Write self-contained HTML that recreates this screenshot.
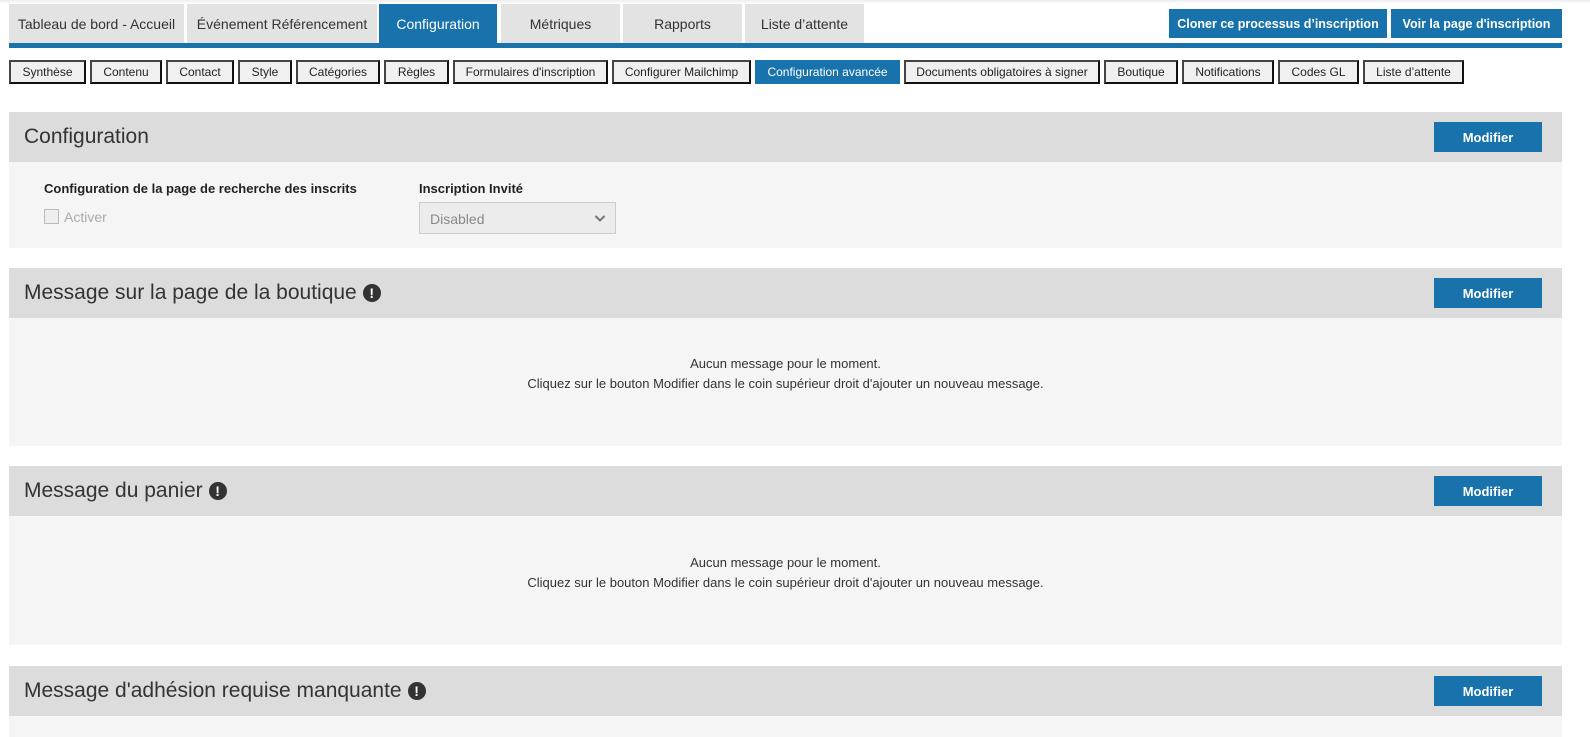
<!DOCTYPE html>
<html><head><meta charset="utf-8"><style>
*{box-sizing:border-box;margin:0;padding:0}
body{width:1590px;height:737px;overflow:hidden;background:#fff;font-family:"Liberation Sans",Arial,sans-serif;color:#333;position:relative}
.a{position:absolute}
.tab{position:absolute;top:4px;height:39px;background:#e3e3e3;font-size:14px;color:#333;display:flex;align-items:center;justify-content:center}
.tab.on{background:#1872ab;color:#fff}
.btn{position:absolute;background:#1872ab;color:#fff;font-size:12.5px;font-weight:bold;display:flex;align-items:center;justify-content:center}
.st{position:absolute;top:60px;height:24px;background:#f0f0f0;border:2px solid #555;border-top-color:#444;border-left-color:#444;border-right-color:#111;border-bottom-color:#111;font-size:12px;color:#222;display:flex;align-items:center;justify-content:center}
.st.on{background:#1872ab;color:#fff;border-color:#1872ab}
.hd{position:absolute;left:9px;width:1553px;height:50px;background:#dcdcdc;font-size:21px;color:#333;display:flex;align-items:center;padding-left:15px}
.bd{position:absolute;left:9px;width:1553px;background:#f5f5f5}
.mod{position:absolute;left:1434px;width:108px;height:30px;background:#1872ab;color:#fff;font-size:13px;font-weight:bold;display:flex;align-items:center;justify-content:center}
.ex{display:inline-block;width:18px;height:18px;border-radius:50%;background:#333;color:#fff;font-size:14px;font-weight:bold;text-align:center;line-height:18px;margin-left:6px}
.msg{position:absolute;left:9px;width:1553px;text-align:center;font-size:13px;line-height:20px;color:#333}
</style></head><body>
<div class="a" style="left:0;top:0;width:1590px;height:4px;background:linear-gradient(#eee,#fff)"></div>
<div class="tab" style="left:9px;width:175px">Tableau de bord - Accueil</div>
<div class="tab" style="left:187px;width:190px">Événement Référencement</div>
<div class="tab on" style="left:379px;width:118px">Configuration</div>
<div class="tab" style="left:501px;width:119px">Métriques</div>
<div class="tab" style="left:623px;width:119px">Rapports</div>
<div class="tab" style="left:745px;width:119px">Liste d’attente</div>
<div class="btn" style="left:1169px;top:9px;width:218px;height:29px">Cloner ce processus d’inscription</div>
<div class="btn" style="left:1391px;top:9px;width:171px;height:29px">Voir la page d'inscription</div>
<div class="a" style="left:9px;top:43px;width:1553px;height:5px;background:#1872ab"></div>

<div class="st" style="left:9px;width:77px">Synthèse</div>
<div class="st" style="left:90px;width:72px">Contenu</div>
<div class="st" style="left:166px;width:68px">Contact</div>
<div class="st" style="left:238px;width:54px">Style</div>
<div class="st" style="left:296px;width:84px">Catégories</div>
<div class="st" style="left:384px;width:65px">Règles</div>
<div class="st" style="left:453px;width:155px">Formulaires d'inscription</div>
<div class="st" style="left:612px;width:139px">Configurer Mailchimp</div>
<div class="st on" style="left:755px;width:145px">Configuration avancée</div>
<div class="st" style="left:904px;width:196px">Documents obligatoires à signer</div>
<div class="st" style="left:1104px;width:74px">Boutique</div>
<div class="st" style="left:1182px;width:92px">Notifications</div>
<div class="st" style="left:1278px;width:81px">Codes GL</div>
<div class="st" style="left:1363px;width:101px">Liste d’attente</div>

<div class="hd" style="top:112px">Configuration</div>
<div class="mod" style="top:122px">Modifier</div>
<div class="bd" style="top:162px;height:86px"></div>
<div class="a" style="left:44px;top:181px;font-size:13px;font-weight:bold;color:#222">Configuration de la page de recherche des inscrits</div>
<div class="a" style="left:44px;top:209px;width:15px;height:15px;border:1px solid #bbb;background:#eee"></div>
<div class="a" style="left:64px;top:209px;font-size:14px;color:#aaa">Activer</div>
<div class="a" style="left:419px;top:181px;font-size:13px;font-weight:bold;color:#222">Inscription Invité</div>
<div class="a" style="left:419px;top:202px;width:197px;height:32px;border:1px solid #ccc;background:#ececec;font-size:14px;color:#888;padding:8px 0 0 10px">Disabled
<svg style="position:absolute;right:9px;top:11px" width="12" height="9" viewBox="0 0 12 9"><path d="M1.5 2l4.5 4.5 4.5-4.5" fill="none" stroke="#777" stroke-width="2"/></svg></div>

<div class="hd" style="top:268px">Message sur la page de la boutique<span class="ex">!</span></div>
<div class="mod" style="top:278px">Modifier</div>
<div class="bd" style="top:318px;height:128px"></div>
<div class="msg" style="top:354px">Aucun message pour le moment.<br>Cliquez sur le bouton Modifier dans le coin supérieur droit d'ajouter un nouveau message.</div>

<div class="hd" style="top:466px">Message du panier<span class="ex">!</span></div>
<div class="mod" style="top:476px">Modifier</div>
<div class="bd" style="top:516px;height:129px"></div>
<div class="msg" style="top:553px">Aucun message pour le moment.<br>Cliquez sur le bouton Modifier dans le coin supérieur droit d'ajouter un nouveau message.</div>

<div class="hd" style="top:666px">Message d'adhésion requise manquante<span class="ex">!</span></div>
<div class="mod" style="top:676px">Modifier</div>
<div class="bd" style="top:716px;height:21px"></div>
</body></html>
